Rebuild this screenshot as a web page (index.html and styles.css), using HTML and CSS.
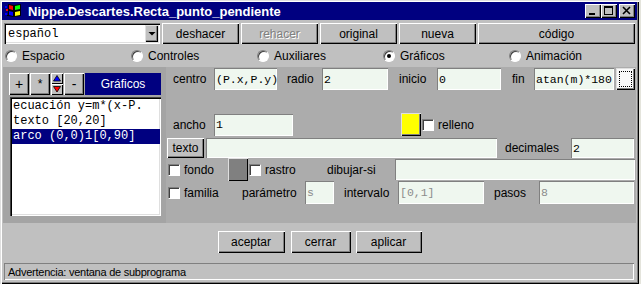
FILE: index.html
```html
<!DOCTYPE html>
<html>
<head>
<meta charset="utf-8">
<title>Nippe.Descartes.Recta_punto_pendiente</title>
<link rel="stylesheet" href="styles.css">
</head>
<body>
<div class="window">
  <div class="titlebar">
    <svg class="appicon" viewBox="0 0 16 14" width="16" height="14">
      <rect x="0" y="2" width="2" height="2" fill="#0000ff"/>
      <rect x="1" y="5" width="2" height="2" fill="#ff0000"/>
      <rect x="0" y="9" width="2" height="2" fill="#0000ff"/>
      <rect x="2" y="11" width="1" height="1" fill="#000"/>
      <polygon points="3,0 9,1 9,13 3,12" fill="#000"/>
      <polygon points="9,1 16,0 16,12 9,13" fill="#000"/>
      <polygon points="4,1 8,2 8,6 4,5" fill="#ff0000"/>
      <polygon points="10,2 15,1 15,5 10,6" fill="#00ff00"/>
      <polygon points="4,7 8,8 8,12 4,11" fill="#0000ff"/>
      <polygon points="10,8 15,7 15,11 10,12" fill="#ffff00"/>
    </svg>
    <span class="title">Nippe.Descartes.Recta_punto_pendiente</span>
    <div class="winbtns">
      <span class="wbtn"><svg viewBox="0 0 16 14" width="16" height="14"><rect x="4" y="9" width="6" height="2" fill="#000"/></svg></span>
      <span class="wbtn"><svg viewBox="0 0 16 14" width="16" height="14"><rect x="3.5" y="2.5" width="8" height="8" fill="none" stroke="#000"/><rect x="3" y="2" width="9" height="2" fill="#000"/></svg></span>
      <span class="wbtn wclose"><svg viewBox="0 0 16 14" width="16" height="14"><path d="M4 3 L11 10 M11 3 L4 10" stroke="#000" stroke-width="1.6"/></svg></span>
    </div>
  </div>

  <div class="toolbar">
    <div class="select">
      <span class="select-text">español</span>
      <span class="select-arrow"><svg viewBox="0 0 12 15" width="12" height="15"><polygon points="2.5,6 9.5,6 6,9.5" fill="#000"/></svg></span>
    </div>
    <button class="btn">deshacer</button>
    <button class="btn disabled">rehacer</button>
    <button class="btn">original</button>
    <button class="btn">nueva</button>
    <button class="btn">código</button>
  </div>

  <div class="tabs">
    <label class="radio"><span class="rcircle"></span>Espacio</label>
    <label class="radio"><span class="rcircle"></span>Controles</label>
    <label class="radio"><span class="rcircle"></span>Auxiliares</label>
    <label class="radio"><span class="rcircle checked"></span>Gráficos</label>
    <label class="radio"><span class="rcircle"></span>Animación</label>
  </div>

  <div class="main">
    <div class="leftpanel">
      <div class="listhead">
        <span class="hbtn">+</span>
        <span class="hbtn star">*</span>
        <span class="arrows">
          <span class="abtn"><svg viewBox="0 0 12 11" width="12" height="11"><polygon points="2.5,8 9.5,8 6,2.5" fill="#0000ff" stroke="#000" stroke-width="0.8"/></svg></span>
          <span class="abtn"><svg viewBox="0 0 12 11" width="12" height="11"><polygon points="2.5,2.5 9.5,2.5 6,8" fill="#ff0000" stroke="#000" stroke-width="0.8"/></svg></span>
        </span>
        <span class="hbtn">-</span>
        <span class="hlabel">Gráficos</span>
      </div>
      <div class="listbox">
        <div class="item">ecuación y=m*(x-P.</div>
        <div class="item">texto [20,20]</div>
        <div class="item selected">arco (0,0)1[0,90]</div>
      </div>
    </div>

    <div class="editor">
      <div class="row row-a">
        <span class="lbl w-centro">centro</span>
        <span class="field fw-centro">(P.x,P.y)</span>
        <span class="lbl w-radio">radio</span>
        <span class="field fw-radio">2</span>
        <span class="lbl w-inicio">inicio</span>
        <span class="field fw-inicio">0</span>
        <span class="lbl w-fin">fin</span>
        <span class="field fw-fin">atan(m)*180</span>
        <span class="dotbtn"><span class="dots"></span></span>
      </div>
      <div class="spacer"></div>
      <div class="row row-b">
        <span class="lbl w-ancho">ancho</span>
        <span class="field fw-ancho">1</span>
        <span class="swatch yellow"></span>
        <span class="check"></span>
        <span class="lbl cl-relleno">relleno</span>
      </div>
      <div class="row row-c">
        <button class="btn texto">texto</button>
        <span class="field fw-texto"></span>
        <span class="lbl w-decimales">decimales</span>
        <span class="field fw-decimales">2</span>
      </div>
      <div class="row row-d">
        <span class="check"></span>
        <span class="lbl w-fondo">fondo</span>
        <span class="swatch grey"></span>
        <span class="check"></span>
        <span class="lbl w-rastro">rastro</span>
        <span class="lbl w-dibujar">dibujar-si</span>
        <span class="field fw-dibujar"></span>
      </div>
      <div class="row row-e">
        <span class="check"></span>
        <span class="lbl w-familia">familia</span>
        <span class="lbl w-parametro">parámetro</span>
        <span class="field off fw-parametro">s</span>
        <span class="lbl w-intervalo">intervalo</span>
        <span class="field off fw-intervalo">[0,1]</span>
        <span class="lbl w-pasos">pasos</span>
        <span class="field off fw-pasos">8</span>
      </div>
    </div>
  </div>

  <div class="actions">
    <button class="btn act-aceptar">aceptar</button>
    <button class="btn act-cerrar">cerrar</button>
    <button class="btn act-aplicar">aplicar</button>
  </div>

  <div class="status">Advertencia: ventana de subprograma</div>
</div>
</body>
</html>
```

FILE: styles.css
```css
* { box-sizing: border-box; }

body {
  margin: 0;
  width: 641px;
  height: 284px;
  overflow: hidden;
  background: #e4e4dc;
  font-family: "Liberation Sans", Arial, sans-serif;
  font-size: 12px;
  color: #000;
}

.window {
  width: 639px;
  height: 284px;
  padding: 2px;
  background: #c0c0c0;
  box-shadow: inset 1px 1px #dfdfdf, inset 2px 2px #ffffff, inset -1px -1px #000000, inset -2px -2px #808080;
}

/* title bar */
.titlebar {
  height: 18px;
  background: #000080;
  color: #fff;
  display: flex;
  align-items: center;
  padding: 0 2px 0 3px;
}
.appicon { flex: none; margin-right: 7px; }
.title { font-weight: bold; font-size: 13px; white-space: nowrap; }
.winbtns { margin-left: auto; display: flex; }
.wbtn {
  width: 16px;
  height: 14px;
  background: #c0c0c0;
  box-shadow: inset 1px 1px #fff, inset -1px -1px #000, inset -2px -2px #808080;
  display: block;
}
.wbtn svg { display: block; }
.wclose { margin-left: 2px; }

/* buttons */
.btn {
  font: 12px "Liberation Sans", Arial, sans-serif;
  color: #000;
  background: #c0c0c0;
  border: none;
  margin: 0;
  padding: 0;
  display: flex;
  align-items: center;
  justify-content: center;
  box-shadow: inset 1px 1px #ffffff, inset -1px -1px #000000, inset -2px -2px #808080;
}
.btn.disabled { color: #808080; text-shadow: 1px 1px #ffffff; }

/* toolbar */
.toolbar {
  display: grid;
  grid-template-columns: 156px 77px 77px 77px 77px 157px;
  column-gap: 2px;
  height: 21px;
  margin-top: 3px;
  padding-left: 2px;
}
.select {
  background: #fff;
  display: flex;
  align-items: center;
  padding: 2px;
  box-shadow: inset 1px 1px #808080, inset 2px 2px #000, inset -1px -1px #fff, inset -2px -2px #dfdfdf;
}
.select-text { flex: 1; font: 12px "Liberation Mono", monospace; padding-left: 2px; }
.select-arrow {
  width: 13px;
  height: 17px;
  background: #c0c0c0;
  display: flex;
  align-items: center;
  justify-content: center;
  box-shadow: inset 1px 1px #dfdfdf, inset -1px -1px #000, inset -2px -2px #808080;
}

/* radio tabs */
.tabs {
  display: grid;
  grid-template-columns: repeat(5, 126px);
  height: 20px;
  margin-top: 2px;
  padding-left: 3px;
  align-items: center;
}
.radio { display: flex; align-items: center; gap: 5px; }
.rcircle {
  width: 12px;
  height: 12px;
  border-radius: 50%;
  background: #fff;
  border: 1px solid;
  border-color: #808080 #ffffff #ffffff #808080;
  box-shadow: inset 1px 1px #404040;
  display: flex;
  align-items: center;
  justify-content: center;
}
.rcircle.checked::after {
  content: "";
  width: 4px;
  height: 4px;
  border-radius: 50%;
  background: #000;
}

/* main panel */
.main {
  display: flex;
  width: 633px;
  height: 156px;
  margin: 1px 0 0 1px;
  background: #acacac;
}
.leftpanel {
  width: 163px;
  flex: none;
  background: #a4a4a4;
  padding: 6px 0 0 6px;
}
.listhead { display: flex; gap: 1px; height: 22px; width: 152px; }
.hbtn {
  width: 20px;
  background: #c0c0c0;
  display: flex;
  align-items: center;
  justify-content: center;
  font-size: 14px;
  box-shadow: inset 1px 1px #ffffff, inset -1px -1px #000000, inset -2px -2px #808080;
}
.hbtn.star { font-size: 12px; }
.arrows { width: 12px; display: flex; flex-direction: column; }
.abtn {
  height: 11px;
  background: #c0c0c0;
  box-shadow: inset 1px 1px #ffffff, inset -1px -1px #000000;
}
.abtn svg { display: block; }
.hlabel {
  flex: 1;
  background: #000080;
  color: #fff;
  display: flex;
  align-items: center;
  justify-content: center;
  font-size: 12px;
}
.listbox {
  width: 151px;
  height: 119px;
  margin: 2px 0 0 1px;
  background: #fff;
  padding: 2px 1px 0 2px;
  box-shadow: inset 1px 1px #404040, inset 2px 2px #000, inset -1px -1px #fff, inset -2px -2px #dfdfdf;
  font: 12px "Liberation Mono", monospace;
}
.item { height: 15px; line-height: 15px; padding-left: 1px; white-space: nowrap; overflow: hidden; }
.item.selected { background: #000080; color: #fff; }

/* editor */
.editor { flex: 1; }
.row { display: flex; align-items: center; }
.row-a { height: 22px; margin-top: 1px; padding-left: 7px; }
.spacer { height: 23px; }
.row-b { height: 23px; padding-left: 7px; }
.row-c { height: 20px; margin-top: 2px; padding-left: 1px; }
.row-d { height: 23px; padding-left: 1px; }
.row-e { height: 23px; padding-left: 1px; }

.lbl { flex: none; white-space: nowrap; }
.field {
  flex: none;
  height: 22px;
  background: #eff7ef;
  font: 11.5px "Liberation Mono", monospace;
  padding-left: 2px;
  display: flex;
  align-items: center;
  white-space: nowrap;
  overflow: hidden;
  box-shadow: inset 1px 1px #808080, inset -1px -1px #ffffff;
}
.field.off { color: #8c8c8c; }

.w-centro { width: 41px; }
.fw-centro { width: 63px; }
.w-radio { width: 35px; margin-left: 10px; }
.fw-radio { width: 66px; }
.w-inicio { width: 38px; margin-left: 11px; }
.fw-inicio { width: 64px; }
.w-fin { width: 22px; margin-left: 11px; }
.fw-fin { width: 80px; }
.dotbtn {
  width: 19px;
  height: 22px;
  margin-left: 2px;
  background: #fafafa;
  padding: 3px;
  box-shadow: inset 1px 1px #dfdfdf, inset -1px -1px #000, inset -2px -2px #808080;
}
.dots { display: block; width: 100%; height: 100%; border: 1px dotted #000; }

.w-ancho { width: 41px; }
.fw-ancho { width: 79px; }
.swatch {
  flex: none;
  width: 20px;
  height: 23px;
  box-shadow: inset 1px 1px #dfdfdf, inset -1px -1px #000, inset -2px -2px #808080;
}
.swatch.yellow { background: #ffff00; margin-left: 108px; }
.swatch.grey { background: #808080; }
.check {
  flex: none;
  width: 12px;
  height: 12px;
  margin-left: 1px;
  background: #fff;
  border: 1px solid;
  border-color: #808080 #ffffff #ffffff #808080;
  box-shadow: inset 1px 1px #404040;
}
.cl-relleno { margin-left: 4px; }

.texto { width: 37px; height: 20px; }
.fw-texto { width: 291px; height: 20px; margin-left: 2px; }
.w-decimales { width: 66px; margin-left: 8px; }
.fw-decimales { width: 63px; height: 20px; }

.w-fondo { width: 44px; margin-left: 4px; }
.w-rastro { width: 62px; margin-left: 4px; }
.w-dibujar { width: 68px; }
.fw-dibujar { width: 240px; height: 21px; }

.w-familia { width: 58px; margin-left: 4px; }
.w-parametro { width: 63px; }
.fw-parametro { width: 29px; height: 23px; }
.w-intervalo { width: 54px; margin-left: 10px; }
.fw-intervalo { width: 86px; height: 23px; }
.w-pasos { width: 45px; margin-left: 10px; }
.fw-pasos { width: 95px; height: 23px; }

/* bottom */
.actions {
  display: flex;
  justify-content: center;
  height: 22px;
  margin-top: 8px;
}
.act-aceptar { width: 67px; }
.act-cerrar { width: 60px; margin: 0 5px 0 6px; }
.act-aplicar { width: 66px; }

.status {
  width: 630px;
  height: 17px;
  margin: 10px 0 0 2px;
  padding-left: 4px;
  font-size: 11px;
  letter-spacing: -0.25px;
  display: flex;
  align-items: center;
  white-space: nowrap;
  box-shadow: inset 1px 1px #808080, inset -1px -1px #ffffff;
}
```
